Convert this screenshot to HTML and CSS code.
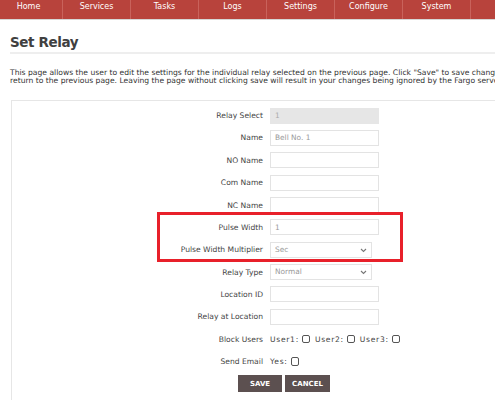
FILE: index.html
```html
<!DOCTYPE html>
<html>
<head>
<meta charset="utf-8">
<title>Set Relay</title>
<link rel="stylesheet" href="styles.css">
</head>
<body>
<div class="page">
  <nav class="topnav">
    <ul class="menu">
      <li class="menu-item">Home</li>
      <li class="menu-item">Services</li>
      <li class="menu-item">Tasks</li>
      <li class="menu-item">Logs</li>
      <li class="menu-item">Settings</li>
      <li class="menu-item">Configure</li>
      <li class="menu-item">System</li>
      <li class="menu-item"></li>
    </ul>
  </nav>
  <main class="content">
    <h1 class="title">Set Relay</h1>
    <p class="intro">This page allows the user to edit the settings for the individual relay selected on the previous page. Click "Save" to save changes and<br>return to the previous page. Leaving the page without clicking save will result in your changes being ignored by the Fargo server.</p>
    <form class="form-box">
      <div class="form-grid">
        <label class="lbl">Relay Select</label>
        <div class="field"><input class="txt disabled" type="text" value="1" readonly></div>

        <label class="lbl">Name</label>
        <div class="field"><input class="txt" type="text" value="Bell No. 1"></div>

        <label class="lbl">NO Name</label>
        <div class="field"><input class="txt" type="text" value=""></div>

        <label class="lbl">Com Name</label>
        <div class="field"><input class="txt" type="text" value=""></div>

        <label class="lbl">NC Name</label>
        <div class="field"><input class="txt" type="text" value=""></div>

        <label class="lbl">Pulse Width</label>
        <div class="field"><input class="txt" type="text" value="1"></div>

        <label class="lbl">Pulse Width Multiplier</label>
        <div class="field"><div class="sel-wrap"><select class="sel"><option>Sec</option></select><svg class="chev" width="7" height="5" viewBox="0 0 7 5"><path d="M1 1 L3.5 3.5 L6 1" fill="none" stroke="#777" stroke-width="1.1"/></svg></div></div>

        <label class="lbl">Relay Type</label>
        <div class="field"><div class="sel-wrap"><select class="sel"><option>Normal</option></select><svg class="chev" width="7" height="5" viewBox="0 0 7 5"><path d="M1 1 L3.5 3.5 L6 1" fill="none" stroke="#777" stroke-width="1.1"/></svg></div></div>

        <label class="lbl">Location ID</label>
        <div class="field"><input class="txt" type="text" value=""></div>

        <label class="lbl">Relay at Location</label>
        <div class="field"><input class="txt" type="text" value=""></div>

        <label class="lbl">Block Users</label>
        <div class="field checks"><span class="chk-lbl">User1:</span><input class="chk" type="checkbox"><span class="chk-lbl">User2:</span><input class="chk" type="checkbox"><span class="chk-lbl">User3:</span><input class="chk" type="checkbox"></div>

        <label class="lbl">Send Email</label>
        <div class="field checks"><span class="chk-lbl">Yes:</span><input class="chk" type="checkbox"></div>

        <div class="buttons">
          <button class="btn" type="button">SAVE</button>
          <button class="btn" type="button">CANCEL</button>
        </div>
      </div>
      <div class="highlight"></div>
    </form>
  </main>
</div>
</body>
</html>
```
FILE: styles.css
```css
html, body {
  margin: 0;
  padding: 0;
  background: #fff;
  overflow: hidden;
}
body {
  font-family: "DejaVu Sans", Verdana, sans-serif;
  color: #333;
}
.page {
  width: 800px;
}
.topnav {
  background: #b8433c;
  height: 19px;
  border-bottom: 1px solid #d6d6d6;
  overflow: hidden;
}
.menu {
  list-style: none;
  margin: 0 0 0 -5px;
  padding: 0;
  display: flex;
}
.menu-item {
  width: 68px;
  height: 19px;
  flex: none;
  border-right: 1px solid #c9625b;
  color: #fff;
  font-size: 8px;
  text-align: center;
  line-height: 11px;
  padding-top: 1px;
  box-sizing: border-box;
}
.content {
  padding: 0 0 0 10px;
}
.title {
  margin: 0;
  padding-top: 14px;
  padding-bottom: 2px;
  font-size: 13.5px;
  line-height: 16px;
  font-weight: bold;
  color: #404040;
  letter-spacing: -0.4px;
  border-bottom: 2px solid #eeeeee;
}
.intro {
  margin: 15px 0 0 0;
  font-size: 7.62px;
  line-height: 8.3px;
  color: #333;
  white-space: nowrap;
}
.form-box {
  position: relative;
  margin: 14px 0 0 1px;
  width: 546px;
  border: 1px solid #e6e6e6;
  box-sizing: border-box;
  padding: 7px 0 20px 0;
}
.form-grid {
  display: grid;
  grid-template-columns: 251px 1fr;
  column-gap: 7px;
  grid-auto-rows: 16px;
  row-gap: 6.36px;
  align-items: center;
}
.lbl {
  text-align: right;
  font-size: 7.6px;
  color: #444;
  white-space: nowrap;
}
.field {
  display: flex;
  align-items: center;
  height: 16px;
}
.txt {
  width: 109px;
  height: 16px;
  box-sizing: border-box;
  border: 1px solid #e3e3e3;
  padding: 0 4px;
  margin: 0;
  font-family: "DejaVu Sans", Verdana, sans-serif;
  font-size: 7.4px;
  color: #999;
  background: #fff;
  outline: none;
}
.txt.disabled {
  background: #e6e6e6;
  border-color: #e6e6e6;
  color: #aaa;
}
.sel-wrap {
  position: relative;
  width: 102px;
  height: 16px;
}
.sel {
  display: block;
  -webkit-appearance: none;
  appearance: none;
  width: 102px;
  height: 16px;
  box-sizing: border-box;
  border: 1px solid #e3e3e3;
  border-radius: 0;
  background: #fff;
  padding: 0 4px;
  margin: 0;
  line-height: 14px;
  font-family: "DejaVu Sans", Verdana, sans-serif;
  font-size: 7.4px;
  color: #999;
  outline: none;
}
.chev {
  position: absolute;
  right: 5px;
  top: 6px;
}
.checks {
  font-size: 7.6px;
  color: #444;
}
.chk-lbl {
  letter-spacing: 0.7px;
}
.chk {
  -webkit-appearance: none;
  appearance: none;
  width: 8.5px;
  height: 8.5px;
  box-sizing: border-box;
  border: 1px solid #555;
  border-radius: 2px;
  margin: 0 4.5px 0 3px;
  background: #fff;
}
.buttons {
  grid-column: 1 / span 2;
  display: flex;
  justify-content: center;
  gap: 3px;
  height: 17px;
}
.btn {
  height: 17px;
  border: none;
  background: #5c5050;
  color: #fff;
  font-family: "DejaVu Sans", Verdana, sans-serif;
  font-weight: bold;
  font-size: 7px;
  padding: 0;
  margin: 0;
  width: 44px;
}
.btn + .btn {
  width: 45px;
}
.highlight {
  position: absolute;
  left: 145px;
  top: 111px;
  width: 246px;
  height: 50px;
  box-sizing: border-box;
  border: 3px solid #e8202a;
  pointer-events: none;
}
```
